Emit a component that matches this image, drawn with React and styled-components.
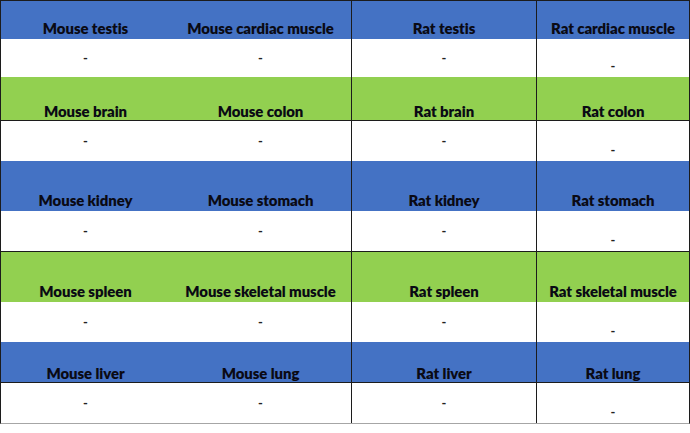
import React from "react";
import styled, { createGlobalStyle } from "styled-components";

const Global = createGlobalStyle`
  html, body { margin: 0; padding: 0; background: #ffffff; }
  body { font-family: Lato, "Liberation Sans", sans-serif; }
`;

const Table = styled.div`
  width: 690px;
  box-sizing: border-box;
  border-top: 1px solid #1c1c1c;
  border-left: 1px solid #1c1c1c;
  border-right: 1px solid #1c1c1c;
  border-bottom: 1px solid #a6a6a6;
  display: flex;
  flex-direction: column;
`;

const Row = styled.div`
  display: grid;
  grid-template-columns: 169px 181px 185px 153px;
  height: ${(p) => p.$h}px;
  box-sizing: border-box;
  background: ${(p) => (p.$bg === "blue" ? "#4472c4" : p.$bg === "green" ? "#92d050" : "#ffffff")};
  border-top: ${(p) => (p.$top ? "1px solid #1c1c1c" : "none")};
  border-bottom: ${(p) => (p.$bottom ? "1px solid #1c1c1c" : "none")};
`;

const HeadCell = styled.div`
  display: flex;
  align-items: flex-end;
  justify-content: center;
  padding-bottom: ${(p) => (p.$tight ? "0px" : "2px")};
  box-sizing: border-box;
  border-left: ${(p) => (p.$line ? "1px solid #1c1c1c" : "none")};
  font-weight: 800;
  font-size: 14.9px;
  letter-spacing: -0.05px;
  line-height: 17px;
  color: #0a0a14;
  white-space: nowrap;
`;

const DataCell = styled.div`
  display: flex;
  justify-content: center;
  align-items: ${(p) => (p.$low ? "flex-end" : "center")};
  padding-bottom: ${(p) => (p.$low ? "3px" : "1px")};
  box-sizing: border-box;
  border-left: ${(p) => (p.$line ? "1px solid #1c1c1c" : "none")};
  font-size: 13px;
  font-weight: 700;
  line-height: 16px;
  color: #222;
`;

const groups = [
  { bg: "blue", h: 38, names: ["Mouse testis", "Mouse cardiac muscle", "Rat testis", "Rat cardiac muscle"], dh: 38 },
  { bg: "green", h: 44, bottom: true, names: ["Mouse brain", "Mouse colon", "Rat brain", "Rat colon"], dh: 40 },
  { bg: "blue", h: 50, names: ["Mouse kidney", "Mouse stomach", "Rat kidney", "Rat stomach"], dh: 40 },
  { bg: "green", h: 51, top: true, names: ["Mouse spleen", "Mouse skeletal muscle", "Rat spleen", "Rat skeletal muscle"], dh: 40 },
  { bg: "blue", h: 41, bottom: true, names: ["Mouse liver", "Mouse lung", "Rat liver", "Rat lung"], dh: 40 },
];

export default function App() {
  return (
    <>
      <Global />
      <Table>
        {groups.map((g, gi) => (
          <React.Fragment key={gi}>
            <Row $bg={g.bg} $h={g.h} $top={g.top} $bottom={g.bottom}>
              {g.names.map((n, i) => (
                <HeadCell key={n} $line={i >= 2} $tight={g.bottom}>{n}</HeadCell>
              ))}
            </Row>
            <Row $h={g.dh}>
              {g.names.map((n, i) => (
                <DataCell key={n} $line={i >= 2} $low={i === 3}>-</DataCell>
              ))}
            </Row>
          </React.Fragment>
        ))}
      </Table>
    </>
  );
}
